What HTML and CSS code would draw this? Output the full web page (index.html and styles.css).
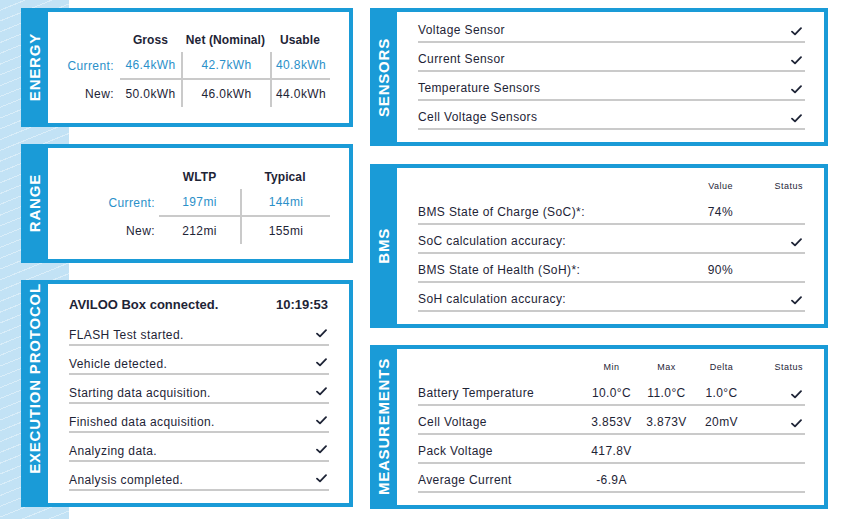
FILE: index.html
```html
<!DOCTYPE html>
<html lang="en">
<head>
<meta charset="utf-8">
<title>AVILOO Report</title>
<link rel="stylesheet" href="styles.css">
</head>
<body>
<svg width="0" height="0" class="defs" aria-hidden="true">
  <symbol id="chk" viewBox="0 0 11 9"><path d="M1 4.6 L4 7.4 L10 1.2" fill="none" stroke="#1e2436" stroke-width="1.8" stroke-linecap="round" stroke-linejoin="round"/></symbol>
</svg>
<div class="page">
  <div class="col col-left">
    <section class="card card-energy">
      <div class="card-label"><span>ENERGY</span></div>
      <div class="card-body energy">
        <div class="tbl tbl-energy">
          <div class="h"></div><div class="h b">Gross</div><div class="h b">Net (Nominal)</div><div class="h b">Usable</div>
          <div class="c lbl">Current:</div><div class="c d">46.4kWh</div><div class="c d sep">42.7kWh</div><div class="c d sep">40.8kWh</div>
          <div class="n lbl">New:</div><div class="n">50.0kWh</div><div class="n sep">46.0kWh</div><div class="n sep">44.0kWh</div>
        </div>
      </div>
    </section>
    <section class="card card-range">
      <div class="card-label"><span>RANGE</span></div>
      <div class="card-body range">
        <div class="tbl tbl-range">
          <div class="h"></div><div class="h b">WLTP</div><div class="h b">Typical</div>
          <div class="c lbl">Current:</div><div class="c d">197mi</div><div class="c d sep">144mi</div>
          <div class="n lbl">New:</div><div class="n">212mi</div><div class="n sep">155mi</div>
        </div>
      </div>
    </section>
    <section class="card card-exec">
      <div class="card-label label-exec"><span>EXECUTION PROTOCOL</span></div>
      <div class="card-body exec">
        <div class="exec-head"><span>AVILOO Box connected.</span><span>10:19:53</span></div>
        <div class="row xrow"><span>FLASH Test started.</span><svg class="check"><use href="#chk"/></svg></div>
        <div class="row xrow"><span>Vehicle detected.</span><svg class="check"><use href="#chk"/></svg></div>
        <div class="row xrow"><span>Starting data acquisition.</span><svg class="check"><use href="#chk"/></svg></div>
        <div class="row xrow"><span>Finished data acquisition.</span><svg class="check"><use href="#chk"/></svg></div>
        <div class="row xrow"><span>Analyzing data.</span><svg class="check"><use href="#chk"/></svg></div>
        <div class="row xrow"><span>Analysis completed.</span><svg class="check"><use href="#chk"/></svg></div>
      </div>
    </section>
  </div>
  <div class="col col-right">
    <section class="card card-sensors">
      <div class="card-label"><span>SENSORS</span></div>
      <div class="card-body list sensors">
        <div class="row"><span>Voltage Sensor</span><svg class="check"><use href="#chk"/></svg></div>
        <div class="row"><span>Current Sensor</span><svg class="check"><use href="#chk"/></svg></div>
        <div class="row"><span>Temperature Sensors</span><svg class="check"><use href="#chk"/></svg></div>
        <div class="row"><span>Cell Voltage Sensors</span><svg class="check"><use href="#chk"/></svg></div>
      </div>
    </section>
    <section class="card card-bms">
      <div class="card-label"><span>BMS</span></div>
      <div class="card-body list">
        <div class="grow bms thead"><span></span><span class="r">Value</span><span class="r st">Status</span></div>
        <div class="grow bms row"><span>BMS State of Charge (SoC)*:</span><span class="r">74%</span><span></span></div>
        <div class="grow bms row"><span>SoC calculation accuracy:</span><span></span><span class="r"><svg class="check"><use href="#chk"/></svg></span></div>
        <div class="grow bms row"><span>BMS State of Health (SoH)*:</span><span class="r">90%</span><span></span></div>
        <div class="grow bms row"><span>SoH calculation accuracy:</span><span></span><span class="r"><svg class="check"><use href="#chk"/></svg></span></div>
      </div>
    </section>
    <section class="card card-meas">
      <div class="card-label"><span>MEASUREMENTS</span></div>
      <div class="card-body list">
        <div class="grow meas thead"><span></span><span class="m">Min</span><span class="m">Max</span><span class="m">Delta</span><span class="r st">Status</span></div>
        <div class="grow meas row"><span>Battery Temperature</span><span class="m">10.0°C</span><span class="m">11.0°C</span><span class="m">1.0°C</span><span class="r"><svg class="check"><use href="#chk"/></svg></span></div>
        <div class="grow meas row"><span>Cell Voltage</span><span class="m">3.853V</span><span class="m">3.873V</span><span class="m">20mV</span><span class="r"><svg class="check"><use href="#chk"/></svg></span></div>
        <div class="grow meas row"><span>Pack Voltage</span><span class="m">417.8V</span><span></span><span></span><span></span></div>
        <div class="grow meas row"><span>Average Current</span><span class="m">-6.9A</span><span></span><span></span><span></span></div>
      </div>
    </section>
  </div>
</div>
</body>
</html>
```

FILE: styles.css
```css
* { box-sizing: border-box; }
html, body { margin: 0; padding: 0; }
body {
  width: 856px;
  height: 519px;
  overflow: hidden;
  font-family: "Liberation Sans", Arial, sans-serif;
  font-size: 12px;
  letter-spacing: 0.4px;
  color: #1e2436;
  background:
    repeating-linear-gradient(158deg, rgba(255,255,255,0) 0 9px, rgba(255,255,255,0.4) 9px 10px) 0 0 / 69px 100% no-repeat,
    linear-gradient(#c2e2f5, #c2e2f5) 0 0 / 69px 100% no-repeat,
    #ffffff;
}
.defs { position: absolute; }
.page {
  display: flex;
  gap: 17px;
  padding: 8px 0 0 21px;
}
.col { display: flex; flex-direction: column; gap: 17px; }
.col-left { width: 332px; }
.col-right { width: 458px; }

.card {
  display: flex;
  border: 4px solid #1a9bd7;
  border-left: 0;
  background: #1a9bd7;
}
.card-energy { height: 119px; }
.card-range { height: 119px; }
.card-exec { height: 227px; }
.card-sensors { height: 138px; }
.card-bms { height: 164px; }
.card-meas { height: 164px; }
.card-bms { margin-top: 1px; }

.card-label {
  width: 27px;
  flex: none;
  display: flex;
  align-items: center;
  justify-content: center;
}
.card-label span {
  writing-mode: vertical-rl;
  transform: rotate(180deg);
  color: #ffffff;
  font-weight: bold;
  font-size: 15px;
  letter-spacing: 0.8px;
  line-height: 16px;
  white-space: nowrap;
}
.label-exec { padding-bottom: 30px; }
.card-body { flex: 1; background: #ffffff; }

/* tables */
.tbl { display: grid; text-align: center; }
.tbl > div { display: flex; align-items: center; justify-content: center; line-height: 14px; }
.tbl .b { font-weight: bold; letter-spacing: 0.1px; }
.tbl .h { height: 24px; }
.tbl .c { height: 28px; color: #2b90c9; }
.tbl .c.d { border-bottom: 2px solid #cacaca; }
.tbl .n { height: 27px; }
.tbl .sep { border-left: 2px solid #cacaca; }
.tbl .lbl { justify-content: flex-end; }
.energy { padding: 16px 0 0 21px; }
.tbl-energy { grid-template-columns: 51px 61px 89px 60px; }
.tbl-energy .lbl { padding-right: 6px; }
.range { padding: 17px 0 0 21px; }
.tbl-range { grid-template-columns: 90px 81px 90px; }
.tbl-range .lbl { padding-right: 4px; }

/* lists */
.row {
  display: flex;
  justify-content: space-between;
  align-items: flex-end;
  height: 29px;
  padding-bottom: 4px;
  border-bottom: 2px solid #cacaca;
  line-height: 14px;
}
.check { width: 11px; height: 9px; display: block; margin: 0 3px 1px 0; }
.list { padding: 0 19px 0 21px; }
.sensors { padding-top: 2px; }

.exec { padding: 0 20px 0 21px; }
.exec-head {
  height: 33px;
  display: flex;
  justify-content: space-between;
  align-items: flex-end;
  padding: 0 1px 5px 0;
  font-weight: bold;
  font-size: 13px;
  letter-spacing: 0;
  line-height: 15px;
}
.xrow { padding-bottom: 2px; }
.xrow .check { margin: 0 2px 4px 0; }

.grow { display: grid; align-items: end; }
.grow.row { display: grid; }
.bms { grid-template-columns: 1fr 60px 70px; }
.meas { grid-template-columns: 1fr 55px 55px 55px 56px; }
.grow .r { justify-self: end; padding-right: 2px; }
.grow .r .check { margin: 0 1px 1px 0; }
.grow .m { justify-self: center; }
.thead {
  height: 28px;
  padding-bottom: 4px;
  font-size: 9px;
  letter-spacing: 0.5px;
  line-height: 12px;
}
.thead .st { padding-right: 2px; }
```
